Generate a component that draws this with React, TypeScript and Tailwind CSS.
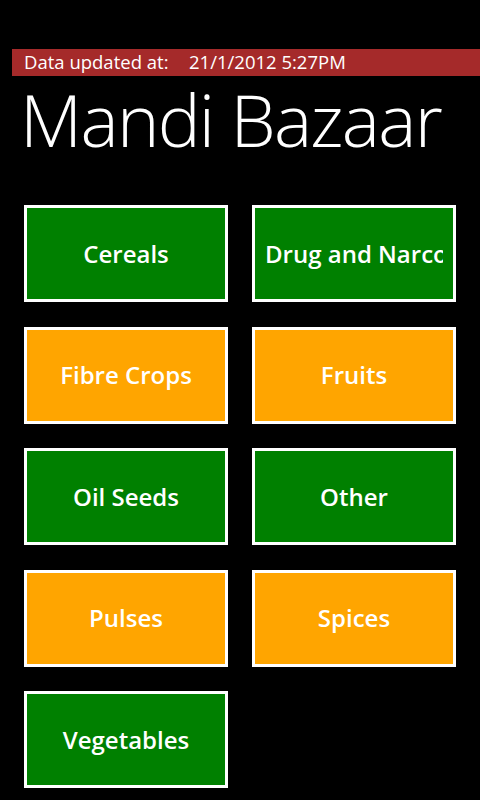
const tiles = [
  { label: 'Cereals', color: 'bg-[#008000]' },
  { label: 'Drug and Narcotics', color: 'bg-[#008000]' },
  { label: 'Fibre Crops', color: 'bg-[#ffa500]' },
  { label: 'Fruits', color: 'bg-[#ffa500]' },
  { label: 'Oil Seeds', color: 'bg-[#008000]' },
  { label: 'Other', color: 'bg-[#008000]' },
  { label: 'Pulses', color: 'bg-[#ffa500]' },
  { label: 'Spices', color: 'bg-[#ffa500]' },
  { label: 'Vegetables', color: 'bg-[#008000]' },
];

export default function App() {
  return (
    <div className="w-[480px] h-[800px] bg-black text-white overflow-hidden font-['Open_Sans',sans-serif]">
      <div className="pt-[49px] pl-3">
        <div className="h-[27px] bg-[#a52a2a] pl-3 flex items-center text-[18.5px] leading-none">
          <span className="w-[165px]">Data updated at:</span>
          <span>21/1/2012 5:27PM</span>
        </div>
      </div>

      <h1 className="pl-[20px] mt-[3px] text-[72px] font-light leading-[80px] tracking-[-1.7px]">Mandi Bazaar</h1>

      <div className="grid grid-cols-[204px_204px] gap-x-6 gap-y-[24.5px] pl-6 mt-[46px]">
        {tiles.map((tile) => (
          <div key={tile.label} className={`h-[97px] border-[3px] border-white ${tile.color} px-[10px] flex items-center`}>
            <div className="w-full overflow-hidden whitespace-nowrap text-center text-[24px] font-semibold">
              {tile.label}
            </div>
          </div>
        ))}
      </div>
    </div>
  );
}
